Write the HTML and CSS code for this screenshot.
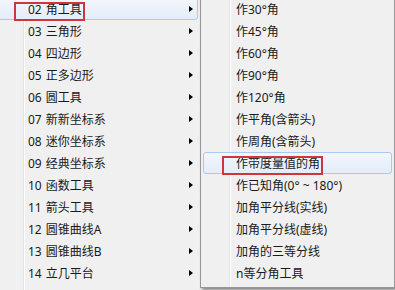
FILE: index.html
```html
<!DOCTYPE html>
<html>
<head>
    <meta charset="utf-8">
    <title>角工具菜单</title>
    <link rel="stylesheet" href="styles.css">
</head>
<body>
    <div class="menus">
        <div class="menu main_menu">
            <div class="item hover">02 角工具<span class="arrow"></span><span class="mark mark_main"></span></div>
            <div class="item">03 三角形<span class="arrow"></span></div>
            <div class="item">04 四边形<span class="arrow"></span></div>
            <div class="item">05 正多边形<span class="arrow"></span></div>
            <div class="item">06 圆工具<span class="arrow"></span></div>
            <div class="item">07 新新坐标系<span class="arrow"></span></div>
            <div class="item">08 迷你坐标系<span class="arrow"></span></div>
            <div class="item">09 经典坐标系<span class="arrow"></span></div>
            <div class="item">10 函数工具<span class="arrow"></span></div>
            <div class="item">11 箭头工具<span class="arrow"></span></div>
            <div class="item">12 圆锥曲线A<span class="arrow"></span></div>
            <div class="item">13 圆锥曲线B<span class="arrow"></span></div>
            <div class="item">14 立几平台<span class="arrow"></span></div>
        </div>
        <div class="menu sub_menu">
            <div class="item">作30°角</div>
            <div class="item">作45°角</div>
            <div class="item">作60°角</div>
            <div class="item">作90°角</div>
            <div class="item">作120°角</div>
            <div class="item">作平角(含箭头)</div>
            <div class="item">作周角(含箭头)</div>
            <div class="item hover">作带度量值的角<span class="mark mark_sub"></span></div>
            <div class="item">作已知角(0° ~ 180°)</div>
            <div class="item">加角平分线(实线)</div>
            <div class="item">加角平分线(虚线)</div>
            <div class="item">加角的三等分线</div>
            <div class="item">n等分角工具</div>
        </div>
    </div>
</body>
</html>
```

FILE: styles.css
```css
body {
    margin: 0;
    background: #f0f0f0;
    overflow: hidden;
    font-family: "Noto Sans", "Noto Sans CJK SC", sans-serif;
    font-size: 12px;
    color: #1a1a1a;
}

.menus {
    display: flex;
    align-items: flex-start;
    margin-top: -4px;
}

.menu {
    box-sizing: border-box;
    background-color: #f0f0f0;
}

.main_menu {
    width: 206px;
    height: 300px;
    margin-left: -4px;
    padding: 2px;
    word-spacing: 1px;
    background-image: linear-gradient(90deg, transparent 27px, #e2e3e3 27px, #e2e3e3 28px, #fff 28px, #fff 29px, transparent 29px);
}

.sub_menu {
    width: 195px;
    flex-shrink: 0;
    padding: 1px 2px 3px;
    border: 1px solid #979797;
    box-shadow: 2px 2px 3px rgba(0, 0, 0, 0.45);
    background-image: linear-gradient(90deg, transparent 28px, #e2e3e3 28px, #e2e3e3 29px, #fff 29px, #fff 30px, transparent 30px);
    z-index: 1;
}

.item {
    position: relative;
    display: flex;
    align-items: center;
    height: 22px;
    box-sizing: border-box;
    border: 1px solid transparent;
    border-radius: 3px;
    white-space: nowrap;
}

.main_menu .item {
    padding-left: 29px;
}

.sub_menu .item {
    padding-left: 32px;
}

.item.hover {
    border-color: #a9c9ee;
    background: linear-gradient(#f3f7fc, #e3ecf8);
}

.arrow {
    margin-left: auto;
    margin-right: 4px;
    width: 0;
    height: 0;
    border-left: 4px solid #000;
    border-top: 3.5px solid transparent;
    border-bottom: 3.5px solid transparent;
}

.mark {
    position: absolute;
    box-sizing: border-box;
    border: 2px solid #cf353c;
}

.mark_main {
    left: 15px;
    top: 3px;
    width: 71px;
    height: 19px;
}

.mark_sub {
    left: 18px;
    top: 3px;
    width: 101px;
    height: 19px;
}
```
